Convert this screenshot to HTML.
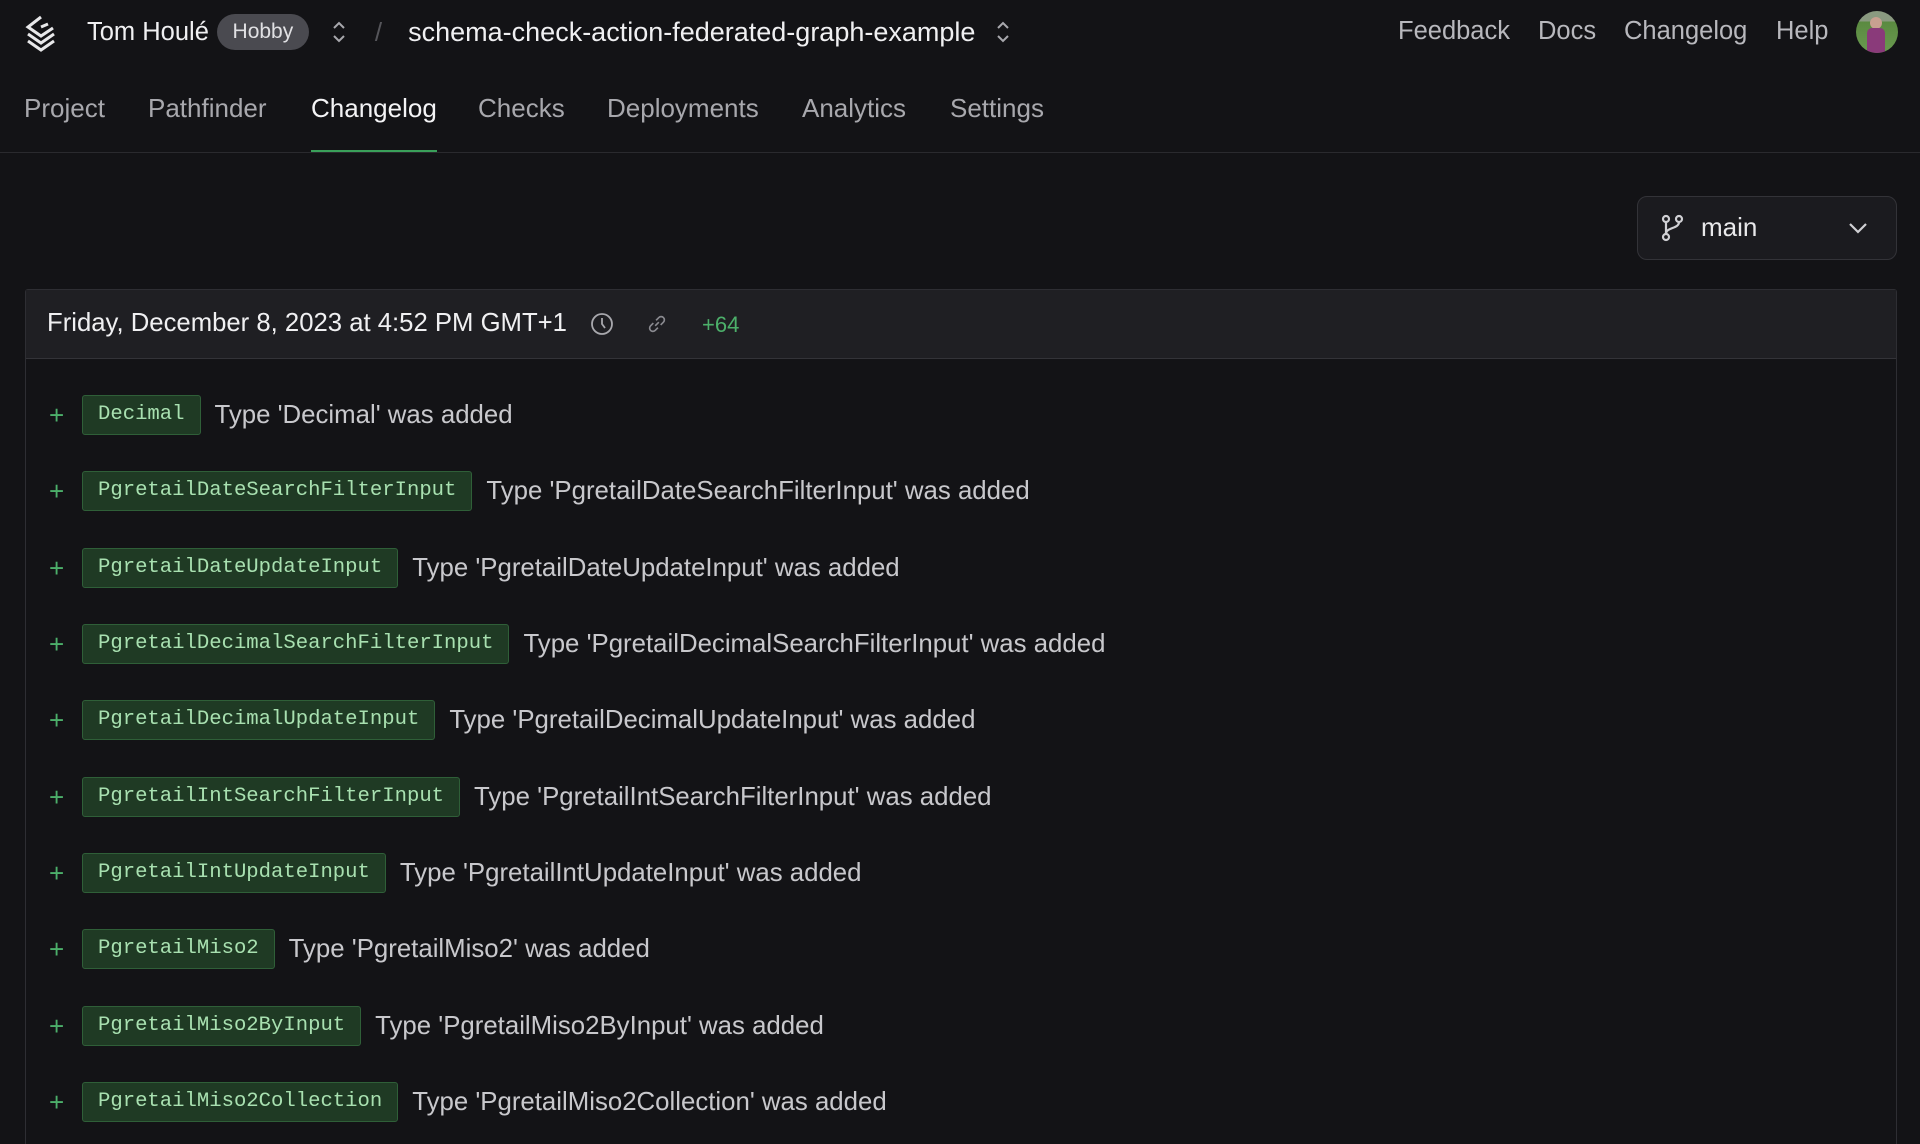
<!DOCTYPE html>
<html style="overflow:hidden;height:1144px"><head><meta charset="utf-8"><style>
*{box-sizing:border-box;margin:0;padding:0}
body{width:1920px;height:1144px;overflow:hidden;background:#131316;font-family:"Liberation Sans",sans-serif;color:#e8e8ea;position:relative}
.abs{position:absolute}
.top{font-size:25.5px;white-space:nowrap;color:#b8b8bd}
.nav a{position:absolute;top:93px;font-size:26px;color:#a8a8ad}
.plus{position:absolute;left:49px;color:#4caf6a;font-size:26px;line-height:40px;font-weight:300}
.rowc{position:absolute;left:82px;height:40px;display:flex;align-items:center;white-space:nowrap}
.badge{height:40px;line-height:38px;padding:0 15px;background:#1f3a24;border:1.5px solid #2f5f38;border-radius:3px;font-family:"Liberation Mono",monospace;font-size:20.6px;color:#a8e0b0}
.desc{font-size:25.8px;color:#c8c8cc;margin-left:14px}
</style></head><body>
<svg class="abs" style="left:22px;top:14px" width="38" height="38" viewBox="0 0 38 38" fill="none" stroke="#e8e8ea" stroke-width="3"><path d="M19 3L6 13l13 9 12-8"/><path d="M6 20l13 9 13-9"/><path d="M6 27l13 9 13-9"/><path d="M19 13l7 -3"/></svg>
<div class="abs" style="left:87px;top:14px;height:36px;display:flex;align-items:center;white-space:nowrap">
<span style="font-size:25.5px;color:#f0f0f2">Tom Houlé</span>
<span style="margin-left:8px;width:92px;height:36px;border-radius:18px;background:#4a4a50;color:#e0e0e3;font-size:21px;text-align:center;line-height:36px">Hobby</span>
<svg style="margin-left:20px" width="20" height="26" viewBox="0 0 20 26" fill="none" stroke="#a8a8ad" stroke-width="2"><path d="M5 9l5-5 5 5M5 17l5 5 5-5"/></svg>
<span style="margin-left:26px;font-size:26px;color:#55555a">/</span>
<span style="margin-left:26px;font-size:27px;color:#f0f0f2">schema-check-action-federated-graph-example</span>
<svg style="margin-left:18px" width="20" height="26" viewBox="0 0 20 26" fill="none" stroke="#a8a8ad" stroke-width="2"><path d="M5 9l5-5 5 5M5 17l5 5 5-5"/></svg>
</div>
<div class="abs top" style="left:1398px;top:17px">Feedback</div>
<div class="abs top" style="left:1538px;top:17px">Docs</div>
<div class="abs top" style="left:1624px;top:17px">Changelog</div>
<div class="abs top" style="left:1776px;top:17px">Help</div>
<div class="abs" style="left:1856px;top:11px;width:42px;height:42px;border-radius:50%;overflow:hidden;background:linear-gradient(#8a9a80 0 25%,#5a8a40 25%,#6a9a50 100%)"><div style="position:absolute;left:14px;top:6px;width:12px;height:12px;border-radius:50%;background:#c8a090"></div><div style="position:absolute;left:11px;top:17px;width:18px;height:25px;background:#8a3a7a;border-radius:5px 5px 0 0"></div></div>
<div class="nav">
<a style="left:24px">Project</a><a style="left:148px">Pathfinder</a><a style="left:311px;color:#f4f4f6">Changelog</a><a style="left:478px">Checks</a><a style="left:607px">Deployments</a><a style="left:802px">Analytics</a><a style="left:950px">Settings</a>
</div>
<div class="abs" style="left:311px;top:150px;width:126px;height:3px;background:#3aa05a"></div>
<div class="abs" style="left:0;top:152px;width:1920px;height:1px;background:#2a2a2e"></div>
<div class="abs" style="left:1637px;top:196px;width:260px;height:64px;border:1.5px solid #333338;border-radius:10px;background:#1b1b1f"></div>
<svg class="abs" style="left:1660px;top:214px" width="26" height="28" viewBox="0 0 26 28" fill="none" stroke="#d0d0d4" stroke-width="2.2"><circle cx="6" cy="5" r="3"/><circle cx="19" cy="5" r="3"/><circle cx="6" cy="23" r="3"/><path d="M6 8v12M19 8c0 7-13 5-13 12"/></svg>
<div class="abs" style="left:1701px;top:212px;font-size:26px;color:#e8e8ea">main</div>
<svg class="abs" style="left:1847px;top:220px" width="22" height="16" viewBox="0 0 22 16" fill="none" stroke="#d0d0d4" stroke-width="2.2"><path d="M3 4l8 8 8-8"/></svg>
<div class="abs" style="left:25px;top:289px;width:1872px;height:855px;border:1.5px solid #2e2e33;border-bottom:none;border-radius:3px 3px 0 0"></div>
<div class="abs" style="left:26px;top:290px;width:1870px;height:69px;background:#1f1f23;border-bottom:1.5px solid #333338"></div>
<div class="abs" style="left:47px;top:309px;font-size:25.7px;color:#f0f0f2">Friday, December 8, 2023 at 4:52 PM GMT+1</div>
<svg class="abs" style="left:590px;top:312px" width="24" height="24" viewBox="0 0 24 24" fill="none" stroke="#a8a8ad" stroke-width="1.8"><circle cx="12" cy="12" r="10"/><path d="M12 6v6l3 4"/></svg>
<svg class="abs" style="left:646px;top:313px" width="22" height="22" viewBox="0 0 24 24" fill="none" stroke="#8a8a90" stroke-width="1.8"><path d="M10 14l4-4M8 11l-3 3a3.5 3.5 0 005 5l3-3M16 13l3-3a3.5 3.5 0 00-5-5l-3 3"/></svg>
<div class="abs" style="left:702px;top:312px;font-size:22px;color:#4caf6a">+64</div>

<div class="abs" style="top:395px;left:0;width:1920px;height:40px"><span class="plus">+</span><div class="rowc"><span class="badge">Decimal</span><span class="desc">Type 'Decimal' was added</span></div></div>
<div class="abs" style="top:471px;left:0;width:1920px;height:40px"><span class="plus">+</span><div class="rowc"><span class="badge">PgretailDateSearchFilterInput</span><span class="desc">Type 'PgretailDateSearchFilterInput' was added</span></div></div>
<div class="abs" style="top:548px;left:0;width:1920px;height:40px"><span class="plus">+</span><div class="rowc"><span class="badge">PgretailDateUpdateInput</span><span class="desc">Type 'PgretailDateUpdateInput' was added</span></div></div>
<div class="abs" style="top:624px;left:0;width:1920px;height:40px"><span class="plus">+</span><div class="rowc"><span class="badge">PgretailDecimalSearchFilterInput</span><span class="desc">Type 'PgretailDecimalSearchFilterInput' was added</span></div></div>
<div class="abs" style="top:700px;left:0;width:1920px;height:40px"><span class="plus">+</span><div class="rowc"><span class="badge">PgretailDecimalUpdateInput</span><span class="desc">Type 'PgretailDecimalUpdateInput' was added</span></div></div>
<div class="abs" style="top:777px;left:0;width:1920px;height:40px"><span class="plus">+</span><div class="rowc"><span class="badge">PgretailIntSearchFilterInput</span><span class="desc">Type 'PgretailIntSearchFilterInput' was added</span></div></div>
<div class="abs" style="top:853px;left:0;width:1920px;height:40px"><span class="plus">+</span><div class="rowc"><span class="badge">PgretailIntUpdateInput</span><span class="desc">Type 'PgretailIntUpdateInput' was added</span></div></div>
<div class="abs" style="top:929px;left:0;width:1920px;height:40px"><span class="plus">+</span><div class="rowc"><span class="badge">PgretailMiso2</span><span class="desc">Type 'PgretailMiso2' was added</span></div></div>
<div class="abs" style="top:1006px;left:0;width:1920px;height:40px"><span class="plus">+</span><div class="rowc"><span class="badge">PgretailMiso2ByInput</span><span class="desc">Type 'PgretailMiso2ByInput' was added</span></div></div>
<div class="abs" style="top:1082px;left:0;width:1920px;height:40px"><span class="plus">+</span><div class="rowc"><span class="badge">PgretailMiso2Collection</span><span class="desc">Type 'PgretailMiso2Collection' was added</span></div></div>
</body></html>
